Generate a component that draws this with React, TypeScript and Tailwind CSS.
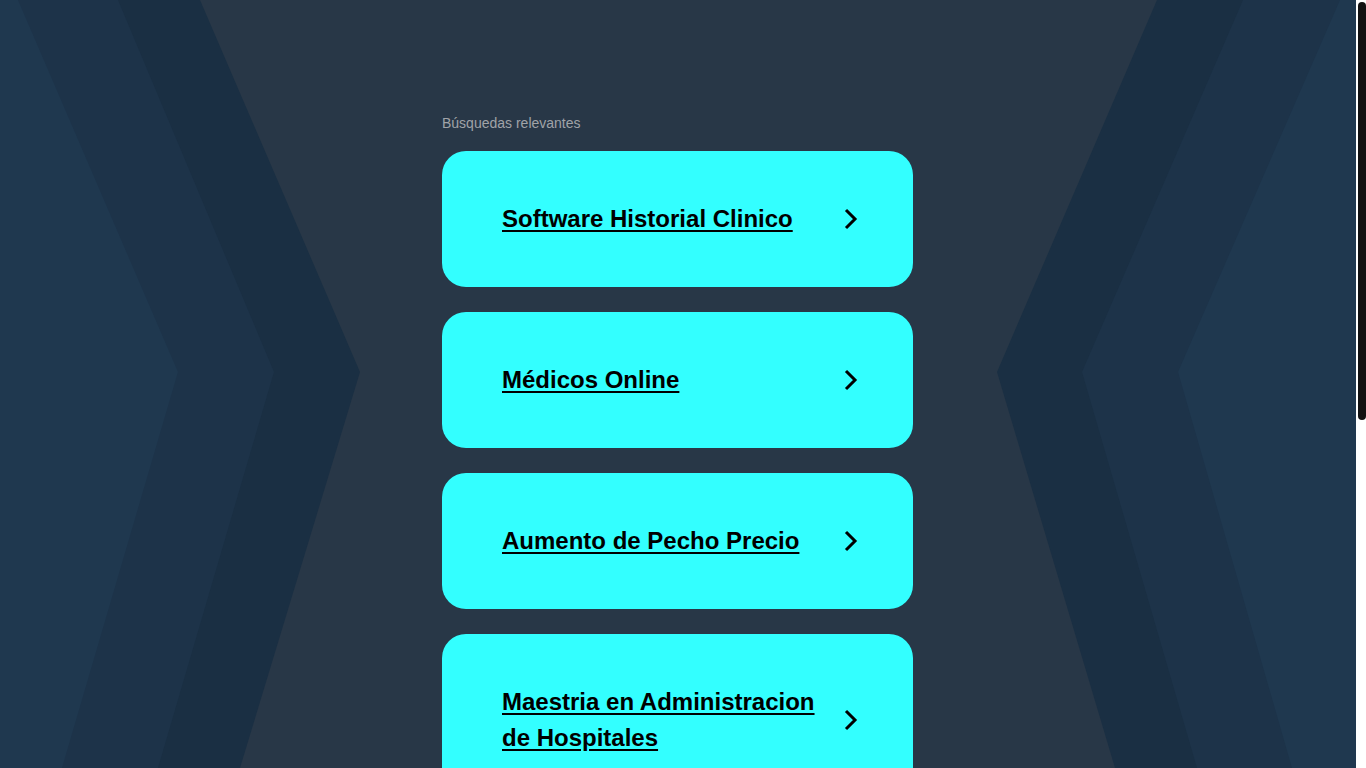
const searches = [
  'Software Historial Clinico',
  'Médicos Online',
  'Aumento de Pecho Precio',
  'Maestria en Administracion de Hospitales',
  'Sistema de Gestion Hospitalaria',
];

function Backdrop() {
  return (
    <svg
      className="absolute inset-0 h-full w-full"
      viewBox="0 0 1356 768"
      preserveAspectRatio="none"
    >
      <rect width="1356" height="768" fill="#283747" />
      <polygon points="0,0 200,0 360,372 240,768 0,768" fill="#1a2f43" />
      <polygon points="0,0 118,0 274,372 158,768 0,768" fill="#1d3349" />
      <polygon points="0,0 18,0 178,372 62,768 0,768" fill="#1f384f" />
      <polygon points="1356,0 1157,0 997,372 1115,768 1356,768" fill="#1a2f43" />
      <polygon points="1356,0 1243,0 1082,372 1197,768 1356,768" fill="#1d3349" />
      <polygon points="1356,0 1340,0 1178,372 1292,768 1356,768" fill="#1f384f" />
    </svg>
  );
}

function Chevron() {
  return (
    <svg width="24" height="24" viewBox="0 0 24 24" className="shrink-0">
      <polyline
        points="8,3 17,12 8,21"
        fill="none"
        stroke="#000"
        strokeWidth="3"
        strokeLinecap="butt"
        strokeLinejoin="miter"
      />
    </svg>
  );
}

export default function App() {
  return (
    <div className="flex h-screen overflow-hidden font-['Liberation_Sans',Arial,sans-serif]">
      <main className="relative flex-1 overflow-hidden pr-[1px]">
        <Backdrop />
        <div className="relative mx-auto w-[471px] pt-[114px]">
          <p className="mb-[19px] text-[14px] leading-[18px] text-[#a0a3a8]">Búsquedas relevantes</p>
          <div className="flex flex-col gap-[25px]">
            {searches.map((s) => (
              <a
                key={s}
                href="#"
                className="flex items-center rounded-[24px] bg-[#33ffff] py-[50px] pl-[60px] pr-[51px]"
              >
                <span className="flex-1 pr-[20px] text-[24px] font-bold leading-[36px] text-black underline underline-offset-[3px]">
                  {s}
                </span>
                <Chevron />
              </a>
            ))}
          </div>
        </div>
      </main>
      <div className="w-[10px] shrink-0 bg-white pl-[2px] pt-[2px]">
        <div className="h-[418px] w-[8px] rounded-[4px] bg-[#121212]" />
      </div>
    </div>
  );
}
